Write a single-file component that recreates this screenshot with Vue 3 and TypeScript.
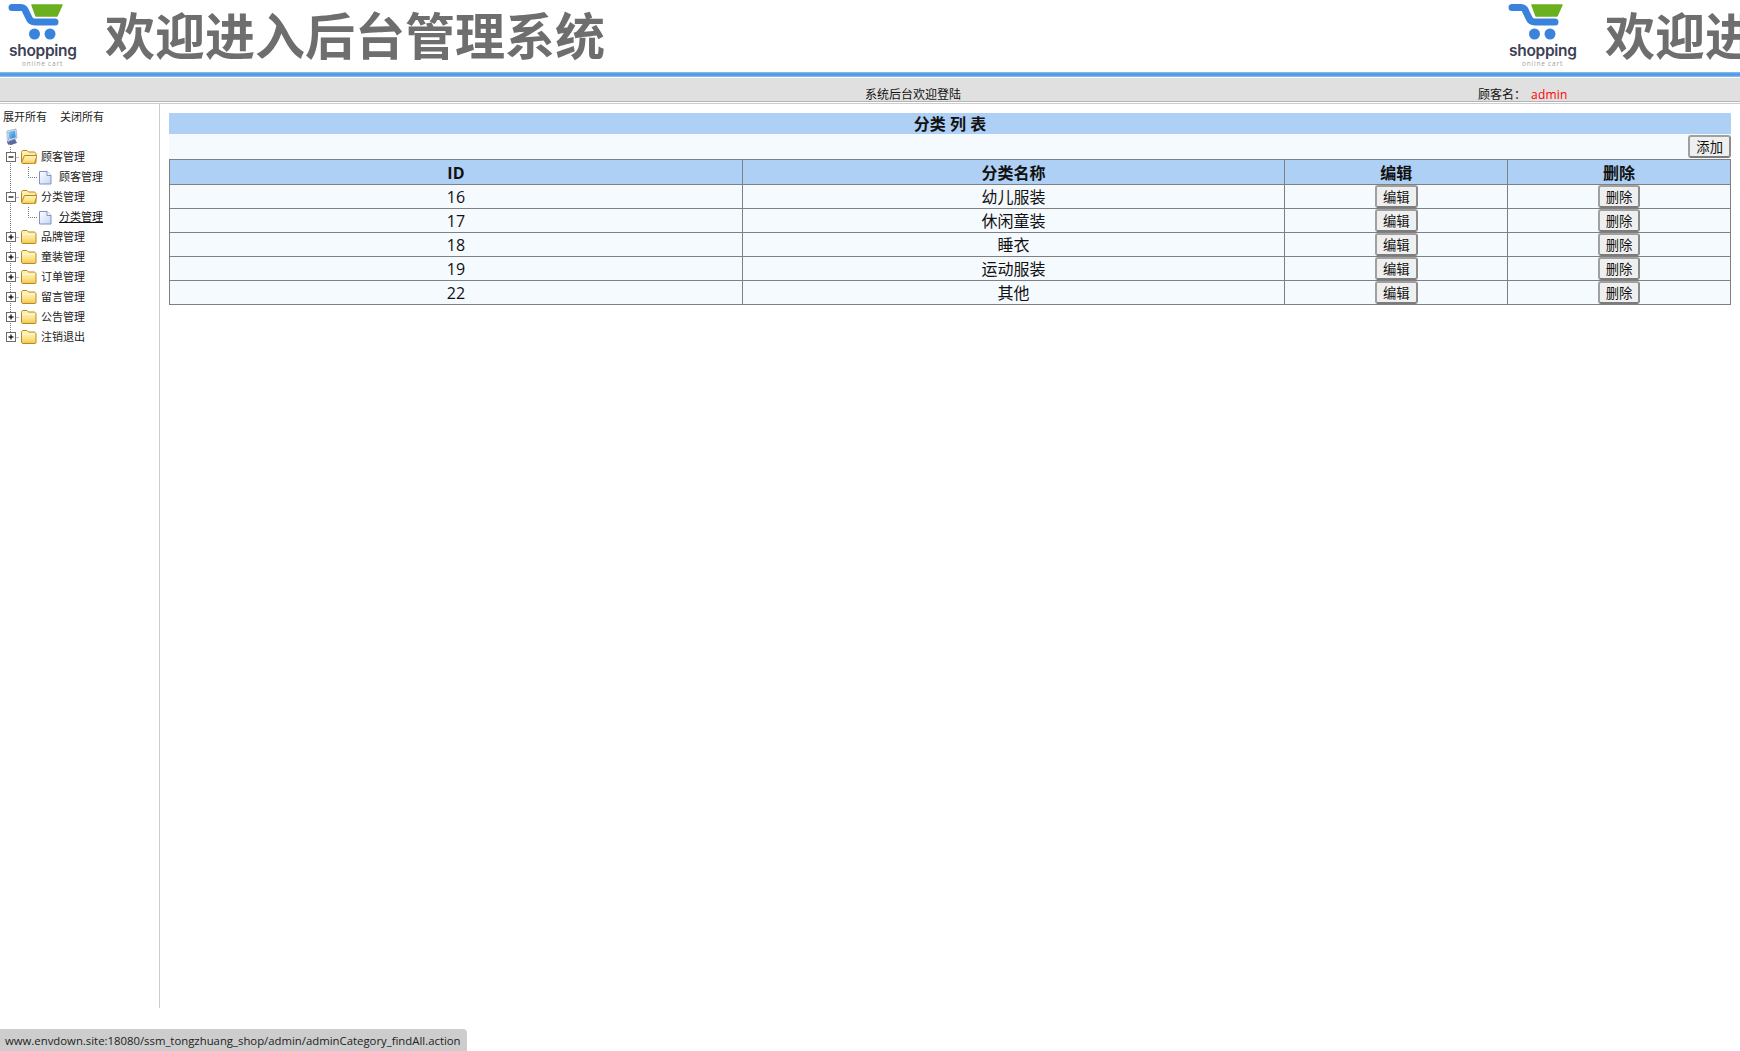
<script setup lang="ts">
interface TreeNode { label: string; open?: boolean; child?: string; active?: boolean }
const nodes: TreeNode[] = [
  { label: '顾客管理', open: true, child: '顾客管理' },
  { label: '分类管理', open: true, child: '分类管理', active: true },
  { label: '品牌管理' },
  { label: '童装管理' },
  { label: '订单管理' },
  { label: '留言管理' },
  { label: '公告管理' },
  { label: '注销退出' },
]
const rows = [
  { id: 16, name: '幼儿服装' },
  { id: 17, name: '休闲童装' },
  { id: 18, name: '睡衣' },
  { id: 19, name: '运动服装' },
  { id: 22, name: '其他' },
]
</script>

<template>
  <div class="page">
    <svg class="defs" width="0" height="0" aria-hidden="true">
      <defs>
        <linearGradient id="folderBody" x1="0" y1="0" x2="0" y2="1">
          <stop offset="0" stop-color="#fff4bf" />
          <stop offset="0.6" stop-color="#fde48a" />
          <stop offset="1" stop-color="#f3c44e" />
        </linearGradient>
        <linearGradient id="fileBody" x1="0" y1="0" x2="1" y2="1">
          <stop offset="0" stop-color="#ffffff" />
          <stop offset="1" stop-color="#c4d6f4" />
        </linearGradient>
        <linearGradient id="screen" x1="0" y1="0" x2="1" y2="1">
          <stop offset="0" stop-color="#8fd0f8" />
          <stop offset="1" stop-color="#1f7fd8" />
        </linearGradient>
      </defs>
    </svg>
    <header class="banner">
      <div v-for="n in 2" :key="n" class="banner-item">
        <div class="logo">
          <svg class="cart" width="70" height="42" viewBox="0 0 70 42">
            <path d="M32 5 H62 L57 16 H36 Z" fill="#6bb01f" stroke="#6bb01f" stroke-width="1.5" stroke-linejoin="round" />
            <path d="M12 7.500 H21 C24 7.500 25 9 26 12 L29 18 C30 21 32 22 35 22 H55" fill="none" stroke="#3a83dc" stroke-width="7" stroke-linecap="round" />
            <circle cx="34.500" cy="34" r="5.500" fill="#3a83dc" />
            <circle cx="50" cy="34" r="5.500" fill="#3a83dc" />
          </svg>
          <span class="logo-name">shopping</span>
          <span class="logo-sub">online cart</span>
        </div>
        <h1 class="banner-title">欢迎进入后台管理系统</h1>
      </div>
    </header>
    <div class="rule"></div>
    <div class="infobar">
      <span class="welcome">系统后台欢迎登陆</span>
      <span class="user">顾客名：<em>admin</em></span>
    </div>

    <div class="body">
      <aside class="side">
        <div class="side-actions"><a>展开所有</a><a>关闭所有</a></div>
        <svg class="root-icon" width="18" height="18" viewBox="0 0 18 18">
          <path d="M5 14 L6 11 H13 L15 15 L9 17 L6 16.500 Z" fill="#5d6aa0" />
          <path d="M5 3 L14 1 L15 10 L7 13 Z" fill="#dfe6f2" stroke="#9aa8c4" stroke-width="0.800" />
          <path d="M6.200 4 L13 2.500 L13.800 9.200 L7.800 11.300 Z" fill="url(#screen)" />
          <path d="M5 4 L5.500 12 L7 13.500" fill="none" stroke="#c4cce0" stroke-width="1.500" />
        </svg>
        <ul class="tree">
          <li v-for="(node, i) in nodes" :key="node.label">
            <div class="tree-row">
              <svg class="cell" width="18" height="20" viewBox="0 0 18 20">
                <path :d="i === nodes.length - 1 ? 'M9.500 0 V10' : 'M9.500 0 V20'" fill="none" stroke="#777" stroke-dasharray="1 1" />
                <path d="M9.500 10.500 H18" fill="none" stroke="#777" stroke-dasharray="1 1" />
                <rect x="5.500" y="5.500" width="9" height="9" fill="#fff" stroke="#6a6a6a" />
                <path d="M7.500 10 H12.500" stroke="#000" stroke-width="1.200" />
                <path v-if="!node.open" d="M10 7.500 V12.500" stroke="#000" stroke-width="1.200" />
              </svg>
              <svg class="cell" width="18" height="20" viewBox="0 0 18 20">
                <path d="M2.500 5.500 C2.500 4.500 3 3.500 4 3.500 H8 L9.500 5 H15 C16 5 17 6 17 7 V15.500 C17 16 16.500 16.500 16 16.500 H4 C3 16.500 2.500 16 2.500 15 Z" fill="url(#folderBody)" stroke="#b68a22" />
                <path v-if="node.open" d="M2.500 15.500 L5.500 8.500 H18 L15.500 16.500" fill="url(#folderBody)" stroke="#b68a22" />
                <path v-else d="M3.500 7.500 H16" stroke="#fff8d8" />
              </svg>
              <span class="tree-label">{{ node.label }}</span>
            </div>
            <div v-if="node.child" class="tree-row">
              <svg class="cell" width="18" height="20" viewBox="0 0 18 20">
                <path d="M9.500 0 V20" fill="none" stroke="#777" stroke-dasharray="1 1" />
              </svg>
              <svg class="cell" width="18" height="20" viewBox="0 0 18 20">
                <path d="M9.500 0 V10.500 H18" fill="none" stroke="#777" stroke-dasharray="1 1" />
              </svg>
              <svg class="cell" width="18" height="20" viewBox="0 0 18 20">
                <path d="M2.500 4.500 H10 L14 8.500 V17 H2.500 Z" fill="url(#fileBody)" stroke="#7f93c8" />
                <path d="M10 4.500 V8.500 H14" fill="#fff" stroke="#7f93c8" />
              </svg>
              <span class="tree-label child" :class="{ active: node.active }">{{ node.child }}</span>
            </div>
          </li>
        </ul>
      </aside>

      <main class="main">
        <div class="panel-title">分类 列 表</div>
        <div class="toolbar"><button class="btn" type="button">添加</button></div>
        <table class="grid">
          <colgroup>
            <col class="c-id" /><col class="c-name" /><col class="c-act" /><col class="c-act" />
          </colgroup>
          <thead>
            <tr><th>ID</th><th>分类名称</th><th>编辑</th><th>删除</th></tr>
          </thead>
          <tbody>
            <tr v-for="row in rows" :key="row.id">
              <td>{{ row.id }}</td>
              <td>{{ row.name }}</td>
              <td><button class="btn" type="button">编辑</button></td>
              <td><button class="btn" type="button">删除</button></td>
            </tr>
          </tbody>
        </table>
      </main>
    </div>

    <div class="status">www.envdown.site:18080/ssm_tongzhuang_shop/admin/adminCategory_findAll.action</div>
  </div>
</template>

<style>
html, body { margin: 0; background: #fff; }
</style>

<style scoped>
.page {
  position: relative;
  width: 1740px;
  height: 1051px;
  overflow: hidden;
  background: #fff;
  color: #111;
  font-family: "Open Sans", "Noto Sans CJK SC", sans-serif;
}
.defs { position: absolute; }
.banner {
  display: flex;
  height: 72px;
  overflow: hidden;
  background: #fff;
}
.banner-item {
  flex: 0 0 1500px;
  display: flex;
  height: 72px;
}
.logo {
  position: relative;
  flex: 0 0 105px;
  height: 72px;
}
.cart { position: absolute; left: 0; top: 0; }
.logo-name {
  position: absolute;
  left: 9px;
  top: 41px;
  font-family: "Inter", "Open Sans", sans-serif;
  font-size: 15.500px;
  font-weight: 600;
  line-height: 20px;
  letter-spacing: -0.300px;
  color: #3d4256;
}
.logo-sub {
  position: absolute;
  left: 22px;
  top: 59px;
  font-size: 6.500px;
  line-height: 9px;
  letter-spacing: 0.800px;
  color: #a0a0a0;
  white-space: nowrap;
}
.banner-title {
  margin: 0;
  font-family: "Noto Sans CJK SC", sans-serif;
  font-size: 50px;
  font-weight: 700;
  line-height: 66px;
  color: #6e6e6e;
  white-space: nowrap;
}
.rule {
  height: 5px;
  background: linear-gradient(#8fc0ee, #4f9ae4 40%, #4f9ae4 60%, #8fc0ee);
  border-bottom: 1px solid #fff;
}
.infobar {
  position: relative;
  height: 23px;
  background: #e0e0e0;
  border-bottom: 1px solid #b5b5b5;
  font-size: 12px;
  line-height: 16px;
}
.welcome { position: absolute; left: 865px; top: 9px; }
.user { position: absolute; left: 1478px; top: 9px; }
.user em { font-style: normal; color: #f00; margin-left: 5px; letter-spacing: 0.200px; }
.body {
  display: flex;
  height: 904px;
  margin-top: 1px;
  border-top: 1px solid #ccc;
}
.side {
  flex: 0 0 160px;
  box-sizing: border-box;
  border-right: 1px solid #ccc;
  padding-left: 1px;
  font-size: 11px;
  color: #222;
}
.side-actions {
  display: flex;
  gap: 13px;
  height: 16px;
  margin: 5px 0 0 2px;
  line-height: 16px;
}
.root-icon { display: block; margin: 3px 0 0 1px; }
.tree { list-style: none; margin: 1px 0 0; padding: 0; }
.tree-row { display: flex; height: 20px; line-height: 20px; }
.cell { flex: none; display: block; }
.tree-label { margin-left: 4px; white-space: nowrap; }
.tree-label.active { text-decoration: underline; color: #111; }
.main {
  flex: 1;
  min-width: 0;
  padding: 9px 9px 0;
}
.panel-title {
  box-sizing: border-box;
  height: 21px;
  padding-top: 1px;
  background: #aed0f4;
  font-size: 16px;
  font-weight: 700;
  line-height: 21px;
  text-align: center;
}
.toolbar {
  display: flex;
  justify-content: flex-end;
  height: 25px;
  box-sizing: border-box;
  padding-top: 1px;
  background: #f5faff;
}
.grid {
  width: 100%;
  border-collapse: collapse;
  table-layout: fixed;
  background: #f5faff;
  font-size: 16px;
}
.c-id { width: 36.7%; }
.c-name { width: 34.75%; }
.c-act { width: 14.275%; }
.grid th, .grid td {
  padding: 0;
  border: 1px solid #808080;
  text-align: center;
  line-height: 22px;
}
.grid th {
  height: 22px;
  padding-top: 2px;
  background: #aed0f4;
  font-weight: 700;
}
.grid td { height: 23px; }
.btn {
  box-sizing: border-box;
  display: inline-block;
  height: 23px;
  padding: 0 6px;
  border: 2px solid;
  border-color: #a0a0a0 #8c8c8c #7c7c7c #a0a0a0;
  border-radius: 3px;
  background: #efefef;
  color: #111;
  font: 13.333px/17px "Noto Sans CJK SC", sans-serif;
  vertical-align: top;
}
.status {
  position: absolute;
  left: 0;
  bottom: 0;
  box-sizing: border-box;
  width: 467px;
  height: 22px;
  padding: 1px 0 0 5px;
  background: #cdcdcd;
  border-top-right-radius: 4px;
  font-size: 11.350px;
  line-height: 22px;
  color: #222;
  white-space: nowrap;
}
</style>
